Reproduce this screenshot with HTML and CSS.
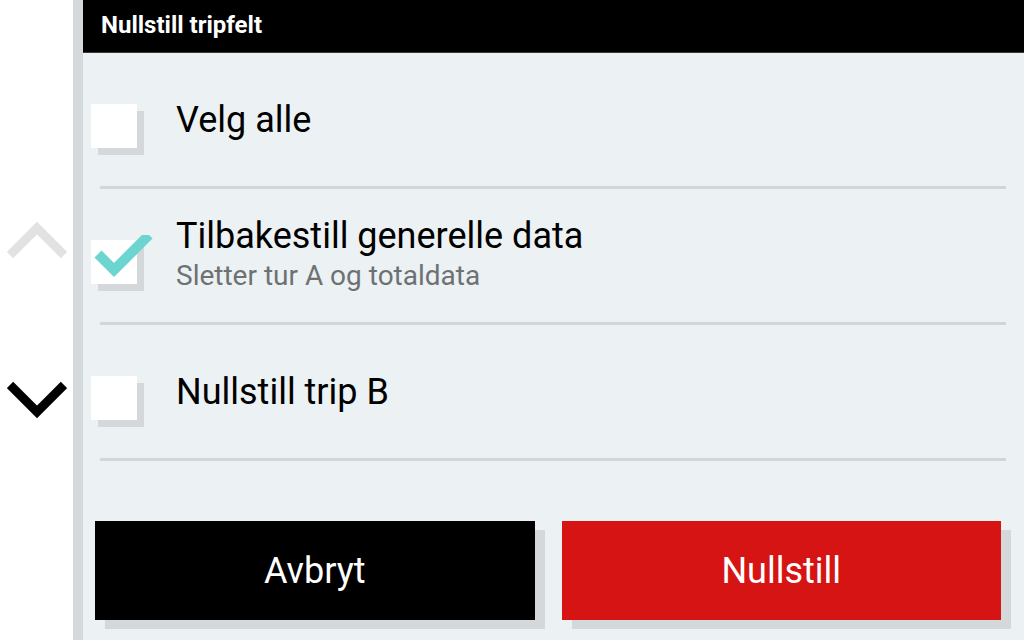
FILE: index.html
```html
<!DOCTYPE html>
<html lang="no">
<head>
    <meta charset="UTF-8">
    <title>Nullstill tripfelt</title>
    <link rel="stylesheet" href="styles.css">
</head>
<body>

<div class="screen">
    <!-- scroll arrows -->
    <div class="side">
        <svg class="arrow" width="60" height="38" viewBox="0 0 60 38">
            <path d="M3 34 L30 7 L57 34" fill="none" stroke="#e2e2e2" stroke-width="9"/>
        </svg>
        <svg class="arrow" width="60" height="38" viewBox="0 0 60 38">
            <path d="M3 4 L30 31 L57 4" fill="none" stroke="#000" stroke-width="9"/>
        </svg>
    </div>

    <div class="panel">
        <div class="header">Nullstill tripfelt</div>

        <div class="list">
            <div class="row">
                <div class="check"></div>
                <div class="label">
                    <div class="title">Velg alle</div>
                </div>
            </div>
            <div class="divider"></div>

            <div class="row">
                <div class="check checked">
                    <svg class="tick" width="70" height="50" viewBox="0 0 70 50">
                        <path d="M7 19 L23 35 L58 0" fill="none" stroke="#6dd5cf" stroke-width="10"/>
                    </svg>
                </div>
                <div class="label double">
                    <div class="title">Tilbakestill generelle data</div>
                    <div class="sub">Sletter tur A og totaldata</div>
                </div>
            </div>
            <div class="divider"></div>

            <div class="row">
                <div class="check"></div>
                <div class="label">
                    <div class="title">Nullstill trip B</div>
                </div>
            </div>
            <div class="divider"></div>

            <div class="row">
                <div class="check"></div>
                <div class="label">
                    <div class="title">Nullstill drivstoffdata</div>
                </div>
            </div>
        </div>

        <div class="footer">
            <button class="btn btn-cancel">Avbryt</button>
            <button class="btn btn-reset">Nullstill</button>
        </div>
    </div>
</div>

</body>
</html>
```

FILE: styles.css
```css
* {
    margin: 0;
    padding: 0;
    box-sizing: border-box;
}

body {
    font-family: Roboto, 'Liberation Sans', sans-serif;
    background: #fff;
    width: 1024px;
    height: 640px;
    overflow: hidden;
}

.screen {
    display: flex;
    height: 640px;
}

/* left column with arrows */
.side {
    width: 73px;
    background: #fff;
    display: flex;
    flex-direction: column;
    align-items: center;
    padding-top: 221px;
    gap: 122px;
}

.arrow {
    display: block;
}

.panel {
    flex: 1;
    border-left: 10px solid #d4d9dc;
    background: #ecf1f4;
    display: flex;
    flex-direction: column;
    min-width: 0;
}

.header {
    height: 53px;
    background: #000;
    border-bottom: 1px solid #3a3a3a;
    color: #fff;
    font-size: 24px;
    font-weight: bold;
    padding: 11px 0 0 18px;
}

.list {
    height: 459px;
    overflow: hidden;
}

.row {
    height: 133px;
    display: flex;
    align-items: center;
    padding-left: 8px;
}

.check {
    position: relative;
    width: 46px;
    height: 44px;
    background: #fff;
    box-shadow: 7px 7px 0 #d4d8db;
    margin-top: 12px;
    flex-shrink: 0;
}

.tick {
    position: absolute;
    left: 0;
    top: -5px;
}

.label {
    margin-left: 39px;
    white-space: nowrap;
}

.label.double {
    margin-bottom: 4px;
}

.title {
    font-size: 36px;
    color: #000;
    line-height: 42px;
}

.sub {
    font-size: 28px;
    color: #6e7173;
    line-height: 34px;
    margin-top: 2px;
}

.divider {
    height: 3px;
    background: #d2d6d9;
    margin: 0 18px 0 17px;
}

.footer {
    flex: 1;
    display: flex;
    gap: 27px;
    padding: 9px 23px 0 12px;
}

.btn {
    flex: 1;
    height: 99px;
    border: none;
    color: #fff;
    font-family: inherit;
    font-size: 36px;
    box-shadow: 10px 9px 0 #d4d8db;
}

.btn-cancel {
    background: #000;
}

.btn-reset {
    background: #d61414;
}
```
